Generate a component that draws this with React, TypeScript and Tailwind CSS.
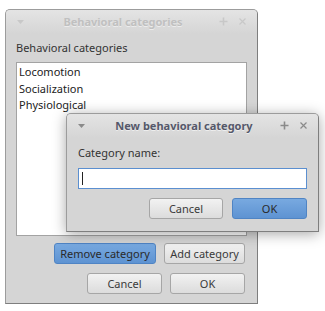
import React from "react";

const font = { fontFamily: '"Noto Sans", "Open Sans", sans-serif' };

function Btn({ children, primary, w }: { children: React.ReactNode; primary?: boolean; w: string }) {
  return (
    <div
      className={`${w} h-[21px] flex items-center justify-center rounded-[3px] border text-[11px] leading-none ${
        primary
          ? "border-[#4f84c4] bg-gradient-to-b from-[#78a9e0] to-[#5e93d2] text-[#2a2a2a]"
          : "border-[#a6a6a6] bg-gradient-to-b from-[#f2f2f2] to-[#dcdcdc] text-[#3a3a3a]"
      }`}
    >
      {children}
    </div>
  );
}

function TitleIcons({ faint }: { faint?: boolean }) {
  const c = faint ? "#c8c8c8" : "#8a8a8a";
  return (
    <>
      <svg width="9" height="6" viewBox="0 0 9 6" className="absolute left-[10px] top-[9px]">
        <path d="M1 1 L8 1 L4.5 5 Z" fill={c} />
      </svg>
      <svg width="9" height="9" viewBox="0 0 9 9" className="absolute right-[29px] top-[7px]">
        <path d="M4.5 0.5 V8.5 M0.5 4.5 H8.5" stroke={c} strokeWidth="1.6" />
      </svg>
      <svg width="9" height="9" viewBox="0 0 9 9" className="absolute right-[10px] top-[7px]">
        <path d="M1.5 1.5 L7.5 7.5 M7.5 1.5 L1.5 7.5" stroke={c} strokeWidth="1.2" />
      </svg>
    </>
  );
}

export default function App() {
  return (
    <div className="relative w-[325px] h-[311px] bg-white overflow-hidden" style={font}>
      {/* Main window */}
      <div className="absolute left-[5px] top-[9px] w-[253px] h-[295px] rounded-t-[5px] border border-[#9c9c9c] border-r-[#7e7e7e] border-b-[#7e7e7e] bg-[#d5d5d5] flex flex-col">
        <div className="relative h-[24px] shrink-0 rounded-t-[4px] bg-gradient-to-b from-[#e4e4e4] to-[#d5d5d5] flex items-center justify-center pr-[17px]">
          <span className="text-[11px] font-bold text-[#c0c0c0] [text-shadow:0_1px_0_#ececec]">Behavioral categories</span>
          <TitleIcons faint />
        </div>
        <div className="flex flex-col flex-1 px-[10px]">
          <div className="h-[28px] flex items-center text-[11px] text-[#333] pt-[1px]">Behavioral categories</div>
          <div className="h-[174px] bg-white border border-[#a3a3a3] flex flex-col px-[2px] pt-[1px] text-[11px] text-[#222] leading-[16.5px]">
            <div>Locomotion</div>
            <div>Socialization</div>
            <div>Physiological</div>
          </div>
          <div className="flex justify-end gap-[8px] pr-[2px] mt-[7px]">
            <Btn primary w="w-[102px]">Remove category</Btn>
            <Btn w="w-[81px]">Add category</Btn>
          </div>
          <div className="flex justify-end gap-[8px] pr-[2px] mt-[9px]">
            <Btn w="w-[75px]">Cancel</Btn>
            <Btn w="w-[75px]">OK</Btn>
          </div>
        </div>
      </div>

      {/* Dialog */}
      <div className="absolute left-[66px] top-[113px] w-[253px] h-[119px] rounded-t-[5px] border border-[#9c9c9c] border-r-[#7e7e7e] border-b-[#7e7e7e] bg-[#d5d5d5] flex flex-col shadow-[0_2px_14px_rgba(0,0,0,0.35)]">
        <div className="relative h-[24px] shrink-0 rounded-t-[4px] bg-gradient-to-b from-[#e4e4e4] to-[#d5d5d5] flex items-center justify-center pr-[17px]">
          <span className="text-[11px] font-bold text-[#55586a] [text-shadow:0_1px_0_#eeeeee]">New behavioral category</span>
          <TitleIcons />
        </div>
        <div className="flex flex-col px-[11px]">
          <div className="h-[30px] flex items-center text-[11px] text-[#333]">Category name:</div>
          <div className="h-[21px] bg-white border border-[#5b8fd0] flex items-center pl-[3px]">
            <div className="w-[1px] h-[13px] bg-[#222]" />
          </div>
          <div className="flex justify-end gap-[9px] mt-[9px]">
            <Btn w="w-[74px]">Cancel</Btn>
            <Btn primary w="w-[75px]">OK</Btn>
          </div>
        </div>
      </div>
    </div>
  );
}
